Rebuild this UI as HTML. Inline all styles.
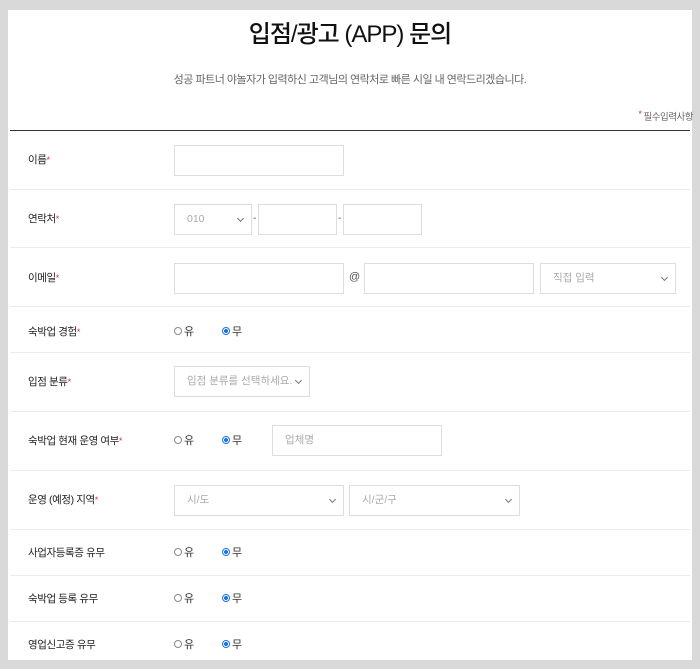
<!DOCTYPE html>
<html><head><meta charset="utf-8"><style>
*{margin:0;padding:0;box-sizing:border-box}
html,body{width:700px;height:671px;background:#fff;overflow:hidden}
body{font-family:"Liberation Sans","Noto Sans CJK KR",sans-serif;color:#222;position:relative}
.frame{position:absolute;left:0;top:0;width:700px;height:669px;background:#d9d9d9}
.card{position:absolute;left:8px;top:10px;width:684px;height:650px;background:#fff}
.a{position:absolute}
.title{left:0;width:700px;top:14px;text-align:center;font-size:24px;font-weight:500;letter-spacing:-1px;color:#111}
.sub{left:0;width:700px;top:71px;text-align:center;font-size:11px;color:#666;letter-spacing:-0.5px}
.req{right:7px;top:109px;font-size:9.5px;color:#666;letter-spacing:-0.5px}
.req b,.lbl b{color:#d33;font-weight:normal;font-size:9px;vertical-align:top}
.hr{left:10px;width:680px;height:1px;background:#ececec}
.lbl{left:28px;font-size:10.5px;color:#222;letter-spacing:-0.4px;line-height:14px}
.box{border:1px solid #ddd;background:#fff;height:31px}
.sel{font-size:10.5px;color:#aaa;line-height:29px;padding-left:12px}
.sel:after{content:"";position:absolute;right:8px;top:11px;width:4px;height:4px;border-right:1px solid #777;border-bottom:1px solid #777;transform:rotate(45deg)}
.r{font-size:11px;color:#333;line-height:14px}
.r i{display:inline-block;width:8px;height:8px;border:1px solid #888;border-radius:50%;margin-right:2px}
.r i.on{border:1px solid #1a73e8;background:radial-gradient(circle,#1a73e8 45%,#fff 50%)}
.dash{font-size:10px;color:#555}
.nochev:after{display:none}
</style></head><body>
<div class="frame"></div>
<div class="card"></div>
<div class="a title">입점/광고 (APP) 문의</div>
<div class="a sub">성공 파트너 야놀자가 입력하신 고객님의 연락처로 빠른 시일 내 연락드리겠습니다.</div>
<div class="a req"><b>*</b> 필수입력사항</div>
<div class="a" style="left:10px;top:130px;width:680px;height:1px;background:#333"></div>

<div class="a hr" style="top:189px"></div>
<div class="a hr" style="top:247px"></div>
<div class="a hr" style="top:306px"></div>
<div class="a hr" style="top:352px"></div>
<div class="a hr" style="top:411px"></div>
<div class="a hr" style="top:470px"></div>
<div class="a hr" style="top:529px"></div>
<div class="a hr" style="top:575px"></div>
<div class="a hr" style="top:621px"></div>

<div class="a lbl" style="top:153px">이름<b>*</b></div>
<div class="a box" style="left:174px;top:145px;width:170px"></div>

<div class="a lbl" style="top:212px">연락처<b>*</b></div>
<div class="a box sel" style="left:174px;top:204px;width:78px">010</div>
<div class="a dash" style="left:253px;top:213px">-</div>
<div class="a box" style="left:258px;top:204px;width:79px"></div>
<div class="a dash" style="left:338px;top:213px">-</div>
<div class="a box" style="left:343px;top:204px;width:79px"></div>

<div class="a lbl" style="top:271px">이메일<b>*</b></div>
<div class="a box" style="left:174px;top:263px;width:170px"></div>
<div class="a dash" style="left:349px;top:271px;font-size:11px">@</div>
<div class="a box" style="left:364px;top:263px;width:170px"></div>
<div class="a box sel" style="left:540px;top:263px;width:136px">직접 입력</div>

<div class="a lbl" style="top:325px">숙박업 경험<b>*</b></div>
<div class="a r" style="left:174px;top:325px"><i></i>유</div>
<div class="a r" style="left:222px;top:325px"><i class="on"></i>무</div>

<div class="a lbl" style="top:375px">입점 분류<b>*</b></div>
<div class="a box sel" style="left:174px;top:366px;width:136px">입점 분류를 선택하세요.</div>

<div class="a lbl" style="top:434px">숙박업 현재 운영 여부<b>*</b></div>
<div class="a r" style="left:174px;top:434px"><i></i>유</div>
<div class="a r" style="left:222px;top:434px"><i class="on"></i>무</div>
<div class="a box sel nochev" style="left:272px;top:425px;width:170px">업체명</div>

<div class="a lbl" style="top:493px">운영 (예정) 지역<b>*</b></div>
<div class="a box sel" style="left:174px;top:485px;width:170px">시/도</div>
<div class="a box sel" style="left:349px;top:485px;width:171px">시/군/구</div>

<div class="a lbl" style="top:546px">사업자등록증 유무</div>
<div class="a r" style="left:174px;top:546px"><i></i>유</div>
<div class="a r" style="left:222px;top:546px"><i class="on"></i>무</div>

<div class="a lbl" style="top:592px">숙박업 등록 유무</div>
<div class="a r" style="left:174px;top:592px"><i></i>유</div>
<div class="a r" style="left:222px;top:592px"><i class="on"></i>무</div>

<div class="a lbl" style="top:638px">영업신고증 유무</div>
<div class="a r" style="left:174px;top:638px"><i></i>유</div>
<div class="a r" style="left:222px;top:638px"><i class="on"></i>무</div>
</body></html>
